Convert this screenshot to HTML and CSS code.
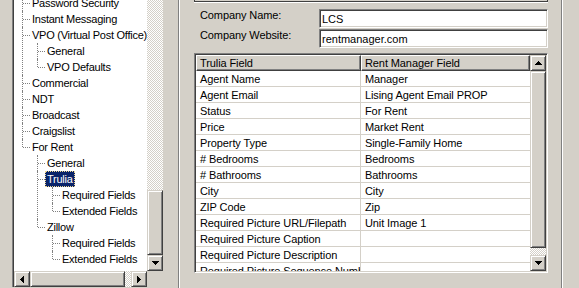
FILE: index.html
```html
<!DOCTYPE html>
<html lang="en">

<head>
    <meta charset="UTF-8">
    <title>Trulia Settings</title>
    <link rel="stylesheet" href="styles.css">
</head>

<body>
    <div class="window">
        <div class="tree">
            <div class="tree-view">
                <ul class="nodes">
                    <li><span class="node">Password Security</span></li>
                    <li><span class="node">Instant Messaging</span></li>
                    <li><span class="node">VPO (Virtual Post Office)</span>
                        <ul>
                            <li><span class="node">General</span></li>
                            <li><span class="node">VPO Defaults</span></li>
                        </ul>
                    </li>
                    <li><span class="node">Commercial</span></li>
                    <li><span class="node">NDT</span></li>
                    <li><span class="node">Broadcast</span></li>
                    <li><span class="node">Craigslist</span></li>
                    <li><span class="node">For Rent</span>
                        <ul>
                            <li><span class="node">General</span></li>
                            <li><span class="node selected">Trulia</span>
                                <ul>
                                    <li><span class="node">Required Fields</span></li>
                                    <li><span class="node">Extended Fields</span></li>
                                </ul>
                            </li>
                            <li><span class="node">Zillow</span>
                                <ul>
                                    <li><span class="node">Required Fields</span></li>
                                    <li><span class="node">Extended Fields</span></li>
                                </ul>
                            </li>
                        </ul>
                    </li>
                </ul>
            </div>
            <div class="vscroll">
                <div class="track"></div>
                <div class="thumb tree-thumb"></div>
                <div class="sbtn"><svg width="7" height="4" shape-rendering="crispEdges"><path d="M0 0h7v1H0zM1 1h5v1H1zM2 2h3v1H2zM3 3h1v1H3z"/></svg></div>
            </div>
            <div class="hscroll">
                <div class="sbtn"><svg width="4" height="7" shape-rendering="crispEdges"><path d="M3 0h1v7H3zM2 1h1v5H2zM1 2h1v3H1zM0 3h1v1H0z"/></svg></div>
                <div class="thumb h-thumb"></div>
                <div class="track"></div>
                <div class="sbtn"><svg width="4" height="7" shape-rendering="crispEdges"><path d="M0 0h1v7H0zM1 1h1v5H1zM2 2h1v3H2zM3 3h1v1H3z"/></svg></div>
            </div>
            <div class="corner"></div>
        </div>

        <div class="page">
            <div class="frame-end"></div>
            <div class="field field-first">
                <label for="companyName">Company Name:</label>
                <input type="text" id="companyName" value="LCS">
            </div>
            <div class="field">
                <label for="companySite">Company Website:</label>
                <input type="text" id="companySite" value="rentmanager.com">
            </div>

            <div class="list">
                <div class="grid">
                    <div class="row head">
                        <div class="cell">Trulia Field</div>
                        <div class="cell">Rent Manager Field</div>
                    </div>
                    <div class="row"><div class="cell">Agent Name</div><div class="cell">Manager</div></div>
                    <div class="row"><div class="cell">Agent Email</div><div class="cell">Lising Agent Email PROP</div></div>
                    <div class="row"><div class="cell">Status</div><div class="cell">For Rent</div></div>
                    <div class="row"><div class="cell">Price</div><div class="cell">Market Rent</div></div>
                    <div class="row"><div class="cell">Property Type</div><div class="cell">Single-Family Home</div></div>
                    <div class="row"><div class="cell"># Bedrooms</div><div class="cell">Bedrooms</div></div>
                    <div class="row"><div class="cell"># Bathrooms</div><div class="cell">Bathrooms</div></div>
                    <div class="row"><div class="cell">City</div><div class="cell">City</div></div>
                    <div class="row"><div class="cell">ZIP Code</div><div class="cell">Zip</div></div>
                    <div class="row"><div class="cell">Required Picture URL/Filepath</div><div class="cell">Unit Image 1</div></div>
                    <div class="row"><div class="cell">Required Picture Caption</div><div class="cell"></div></div>
                    <div class="row"><div class="cell">Required Picture Description</div><div class="cell"></div></div>
                    <div class="row"><div class="cell">Required Picture Sequence Number</div><div class="cell"></div></div>
                </div>
                <div class="vscroll list-scroll">
                    <div class="sbtn"><svg width="7" height="4" shape-rendering="crispEdges"><path d="M3 0h1v1H3zM2 1h3v1H2zM1 2h5v1H1zM0 3h7v1H0z"/></svg></div>
                    <div class="thumb list-thumb"></div>
                    <div class="track"></div>
                    <div class="sbtn"><svg width="7" height="4" shape-rendering="crispEdges"><path d="M0 0h7v1H0zM1 1h5v1H1zM2 2h3v1H2zM3 3h1v1H3z"/></svg></div>
                </div>
            </div>
        </div>
    </div>
</body>

</html>
```

FILE: styles.css
```css
body {
    margin: 0;
    background-color: #d4d0c8;
    font-family: "Liberation Sans", Arial, sans-serif;
    font-size: 11px;
    letter-spacing: -0.1px;
    color: #000;
    overflow: hidden;
}

.window {
    display: flex;
    align-items: flex-start;
    height: 288px;
    padding-left: 12px;
}

/* tree pane */
.tree {
    display: grid;
    grid-template-columns: 133px 16px;
    grid-template-rows: 271px 16px;
    padding-left: 1px;
    border-left: 1px solid #808080;
    border-right: 2px solid #d4d0c8;
    box-shadow: inset 1px 0 #404040;
}

.tree-view {
    background-color: #fff;
    overflow: hidden;
    letter-spacing: -0.25px;
}

.nodes,
.nodes ul {
    list-style: none;
    margin: 0;
    padding: 0 0 0 15px;
}

.nodes {
    padding-left: 8px;
    margin-top: -5px;
}

.nodes li {
    position: relative;
    line-height: 16px;
}

.nodes li::before {
    content: "";
    position: absolute;
    left: 0;
    top: 0;
    bottom: 0;
    border-left: 1px dotted #808080;
}

.nodes li:last-child::before {
    bottom: auto;
    height: 8px;
}

.nodes li::after {
    content: "";
    position: absolute;
    left: 1px;
    top: 8px;
    width: 7px;
    border-top: 1px dotted #808080;
}

.node {
    display: block;
    width: fit-content;
    height: 16px;
    margin-left: 8px;
    padding: 0 2px;
    white-space: nowrap;
}

.node.selected {
    background-color: #0a246a;
    color: #fff;
    outline: 1px dotted #f0d890;
    outline-offset: -1px;
}

/* scrollbars */
.vscroll {
    display: flex;
    flex-direction: column;
    width: 16px;
}

.hscroll {
    display: flex;
    height: 16px;
}

.track {
    flex: 1;
    background: repeating-conic-gradient(#d4d0c8 0 25%, #fff 0 50%) 0 0 / 2px 2px;
}

.sbtn,
.thumb {
    box-sizing: border-box;
    background-color: #d4d0c8;
    border: 1px solid;
    border-color: #d4d0c8 #404040 #404040 #d4d0c8;
    box-shadow: inset 1px 1px #fff, inset -1px -1px #808080;
}

.sbtn {
    flex: none;
    width: 16px;
    height: 16px;
    display: flex;
    align-items: center;
    justify-content: center;
}

.sbtn svg {
    display: block;
    fill: #000;
}

.tree-thumb {
    height: 65px;
}

.h-thumb {
    width: 95px;
}

.corner {
    background-color: #d4d0c8;
}

/* right page */
.page {
    width: 385px;
    height: 300px;
    box-sizing: border-box;
    margin-left: 13px;
    padding: 0 14px 0 15px;
    border-left: 1px solid #808080;
    border-right: 1px solid #fff;
    box-shadow: inset 1px 0 #fff, inset -1px 0 #808080;
}

.frame-end {
    height: 2px;
    box-sizing: border-box;
    border: 1px solid #404040;
    border-top: none;
    box-shadow: 0 1px #fff;
}

.field {
    display: flex;
    align-items: flex-start;
    height: 19px;
    margin-top: 1px;
    padding-left: 6px;
}

.field-first {
    margin-top: 7px;
}

.field label {
    width: 119px;
    line-height: 13px;
}

.field input {
    flex: 1;
    min-width: 0;
    height: 19px;
    box-sizing: border-box;
    margin: 0;
    padding: 0 2px;
    font: inherit;
    color: #000;
    background-color: #fff;
    border: 1px solid;
    border-color: #808080 #fff #fff #808080;
    box-shadow: inset 1px 1px #404040, inset -1px -1px #d4d0c8;
    outline: none;
}

.list {
    display: flex;
    height: 220px;
    box-sizing: border-box;
    margin-top: 5px;
    padding: 1px;
    border: 1px solid;
    border-color: #808080 #fff #fff #808080;
    box-shadow: inset 1px 1px #404040, inset -1px -1px #d4d0c8;
}

.grid {
    flex: 1;
    background-color: #fff;
    overflow: hidden;
}

.row {
    display: flex;
    height: 16px;
    box-sizing: border-box;
    border-bottom: 1px solid #d4d0c8;
    line-height: 17px;
}

.row .cell {
    white-space: nowrap;
    overflow: hidden;
    box-sizing: border-box;
}

.row .cell:first-child {
    width: 165px;
    flex: none;
    padding-left: 4px;
    border-right: 1px solid #d4d0c8;
}

.row .cell:last-child {
    flex: 1;
    padding-left: 4px;
}

.row.head {
    border-bottom: none;
}

.row.head .cell {
    background-color: #d4d0c8;
    line-height: 14px;
    border: 1px solid;
    border-color: #fff #404040 #404040 #fff;
    box-shadow: inset -1px -1px #808080;
}

.row.head .cell:first-child {
    padding-left: 3px;
}

.row.head .cell:last-child {
    padding-left: 3px;
}

.list-thumb {
    height: 177px;
}
```
